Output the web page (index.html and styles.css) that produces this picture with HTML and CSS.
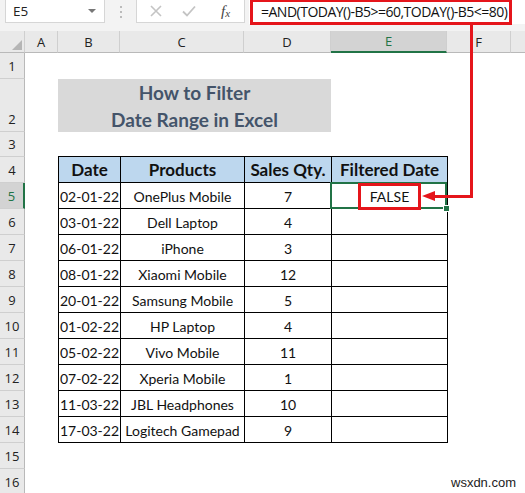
FILE: index.html
```html
<!DOCTYPE html>
<html>
<head>
<meta charset="utf-8">
<link rel="stylesheet" href="styles.css">
</head>
<body>
<div class="app">
  <div class="fbar">
    <div class="namebox"><span class="ref">E5</span><span class="dd"></span></div>
    <div class="grip"><i></i><i></i><i></i></div>
    <div class="btns">
      <svg class="ic" width="14" height="14" viewBox="0 0 14 14"><path d="M2 2L12 12M12 2L2 12" stroke="#c4c4c4" stroke-width="1.6" fill="none"/></svg>
      <svg class="ic" width="16" height="14" viewBox="0 0 16 14"><path d="M2 7.5L6 11.5L14 2.5" stroke="#c4c4c4" stroke-width="1.8" fill="none"/></svg>
      <span class="fx">f<sub>x</sub></span>
    </div>
    <div class="formula">=AND(TODAY()-B5&gt;=60,TODAY()-B5&lt;=80)</div>
  </div>

  <div class="sheet">
    <div class="ch corner"><svg width="10" height="10" viewBox="0 0 10 10"><path d="M10 0L10 10L0 10Z" fill="#b5b5b5"/></svg></div>
    <div class="ch">A</div>
    <div class="ch">B</div>
    <div class="ch">C</div>
    <div class="ch">D</div>
    <div class="ch sel">E</div>
    <div class="ch">F</div>
    <div class="ch last"></div>

    <div class="rh r1">1</div>
    <div class="rh r2">2</div>
    <div class="rh r3">3</div>
    <div class="rh r4">4</div>
    <div class="rh r5 sel">5</div>
    <div class="rh r6">6</div>
    <div class="rh r7">7</div>
    <div class="rh r8">8</div>
    <div class="rh r9">9</div>
    <div class="rh r10">10</div>
    <div class="rh r11">11</div>
    <div class="rh r12">12</div>
    <div class="rh r13">13</div>
    <div class="rh r14">14</div>
    <div class="rh r15">15</div>
    <div class="rh r16">16</div>

    <div class="title"><span>How to Filter</span><span>Date Range in Excel</span></div>

    <table class="data">
      <colgroup><col class="cb"><col class="cc"><col class="cd"><col class="ce"></colgroup>
      <thead>
        <tr><th>Date</th><th>Products</th><th>Sales Qty.</th><th>Filtered Date</th></tr>
      </thead>
      <tbody>
        <tr><td>02-01-22</td><td>OnePlus Mobile</td><td>7</td><td>FALSE</td></tr>
        <tr><td>03-01-22</td><td>Dell Laptop</td><td>4</td><td></td></tr>
        <tr><td>06-01-22</td><td>iPhone</td><td>3</td><td></td></tr>
        <tr><td>08-01-22</td><td>Xiaomi Mobile</td><td>12</td><td></td></tr>
        <tr><td>20-01-22</td><td>Samsung Mobile</td><td>5</td><td></td></tr>
        <tr><td>01-02-22</td><td>HP Laptop</td><td>4</td><td></td></tr>
        <tr><td>05-02-22</td><td>Vivo Mobile</td><td>11</td><td></td></tr>
        <tr><td>07-02-22</td><td>Xperia Mobile</td><td>1</td><td></td></tr>
        <tr><td>11-03-22</td><td>JBL Headphones</td><td>10</td><td></td></tr>
        <tr><td>17-03-22</td><td>Logitech Gamepad</td><td>9</td><td></td></tr>
      </tbody>
    </table>
  </div>

  <div class="selbox"></div>
  <div class="handle"></div>
  <div class="redbox fbox"></div>
  <div class="redbox falsebox"></div>
  <div class="vline"></div>
  <div class="hline"></div>
  <div class="ahead"></div>
  <div class="wm">wsxdn.com</div>
</div>
</body>
</html>
```

FILE: styles.css
```css
html, body {
  margin: 0;
  padding: 0;
  background: #ffffff;
}
.app {
  position: relative;
  width: 525px;
  height: 493px;
  overflow: hidden;
  font-family: Lato, "Open Sans", sans-serif;
  color: #000;
}
.fbar {
  height: 31px;
  background: #f3f3f3;
  display: flex;
  align-items: flex-start;
}
.namebox {
  margin-left: 5px;
  width: 100px;
  height: 23px;
  background: #fff;
  border: 1px solid #d6d6d6;
  border-top: none;
  display: flex;
  align-items: center;
  justify-content: space-between;
  padding: 0 8px 0 7px;
  box-sizing: border-box;
  font-family: "Open Sans", sans-serif;
  font-size: 13.5px;
  color: #222;
}
.dd {
  width: 0;
  height: 0;
  border-left: 4px solid transparent;
  border-right: 4px solid transparent;
  border-top: 4px solid #777;
}
.grip {
  width: 31px;
  height: 23px;
  display: flex;
  flex-direction: column;
  align-items: center;
  justify-content: center;
  gap: 3px;
}
.grip i {
  display: block;
  width: 2px;
  height: 2px;
  background: #bbb;
}
.btns {
  width: 109px;
  height: 23px;
  background: #fff;
  border: 1px solid #d6d6d6;
  border-top: none;
  box-sizing: border-box;
  display: flex;
  align-items: center;
  padding: 0 4px 0 12px;
  gap: 18px;
}
.fx {
  font-family: "Liberation Serif", serif;
  font-style: italic;
  font-size: 15px;
  color: #444;
  margin-left: 6px;
}
.fx sub {
  font-size: 11px;
  vertical-align: -1px;
}
.formula {
  margin-left: 4px;
  flex: 1;
  height: 24px;
  background: #fff;
  font-family: "Open Sans", sans-serif;
  font-size: 14px;
  letter-spacing: -0.5px;
  line-height: 24px;
  padding-left: 12px;
  white-space: nowrap;
  color: #111;
}

.sheet {
  display: grid;
  grid-template-columns: 25px 33px 62px 124px 87px 116px 64px 14px;
  grid-template-rows: 22px 26px 53px 25px repeat(13, 26px);
}
.ch {
  grid-row: 1;
  background: #e9e9e9;
  border-right: 1px solid #cfcfcf;
  border-bottom: 1px solid #b9b9b9;
  box-sizing: border-box;
  display: flex;
  align-items: center;
  justify-content: center;
  font-family: "Open Sans", sans-serif;
  font-size: 13px;
  color: #222;
}
.ch.corner {
  align-items: flex-end;
  justify-content: flex-end;
  padding: 0 2px 2px 0;
}
.ch.sel {
  background: #d3d3d3;
  border-bottom: 2px solid #217346;
  color: #217346;
}
.ch.last { border-right: none; }
.rh {
  grid-column: 1;
  background: #e9e9e9;
  border-right: 1px solid #b9b9b9;
  border-bottom: 1px solid #cfcfcf;
  box-sizing: border-box;
  display: flex;
  align-items: flex-end;
  justify-content: center;
  padding-bottom: 3px;
  font-family: "Open Sans", sans-serif;
  font-size: 13px;
  color: #222;
}
.rh.sel {
  background: #d3d3d3;
  border-right: 2px solid #217346;
  color: #217346;
}
.r1 { grid-row: 2; }
.r2 { grid-row: 3; }
.r3 { grid-row: 4; }
.r4 { grid-row: 5; }
.r5 { grid-row: 6; }
.r6 { grid-row: 7; }
.r7 { grid-row: 8; }
.r8 { grid-row: 9; }
.r9 { grid-row: 10; }
.r10 { grid-row: 11; }
.r11 { grid-row: 12; }
.r12 { grid-row: 13; }
.r13 { grid-row: 14; }
.r14 { grid-row: 15; }
.r15 { grid-row: 16; }
.r16 { grid-row: 17; }

.title {
  grid-column: 3 / 6;
  grid-row: 3;
  background: #d9d9d9;
  display: flex;
  flex-direction: column;
  align-items: center;
  justify-content: center;
  font-weight: bold;
  font-size: 19px;
  line-height: 27px;
  color: #44546a;
  padding-top: 1px;
}

.data {
  grid-column: 3 / 7;
  grid-row: 5 / 16;
  align-self: start;
  border-collapse: collapse;
  table-layout: fixed;
  width: 389px;
  margin-top: -1px;
}
.cb { width: 62px; }
.cc { width: 124px; }
.cd { width: 87px; }
.ce { width: 116px; }
.data tr { height: 26px; }
.data th, .data td {
  border: 1px solid #000;
  padding: 0;
  line-height: 18px;
  text-align: center;
  vertical-align: middle;
  white-space: nowrap;
  overflow: hidden;
}
.data th {
  background: #bdd7ee;
  font-weight: bold;
  font-size: 17px;
  color: #111;
}
.data td {
  font-size: 14px;
  color: #111;
  padding-top: 2px;
}

.selbox {
  position: absolute;
  left: 330px;
  top: 182px;
  width: 113px;
  height: 23px;
  border: 2px solid #217346;
}
.handle {
  position: absolute;
  left: 443px;
  top: 205px;
  width: 5px;
  height: 5px;
  background: #217346;
  border: 1px solid #fff;
}
.redbox {
  position: absolute;
  border: 3px solid #e5151b;
  box-sizing: border-box;
}
.fbox {
  left: 250px;
  top: -1px;
  width: 262px;
  height: 26px;
}
.falsebox {
  left: 358px;
  top: 183px;
  width: 63px;
  height: 27px;
}
.vline {
  position: absolute;
  left: 470px;
  top: 24px;
  width: 3px;
  height: 174px;
  background: #e5151b;
}
.hline {
  position: absolute;
  left: 432px;
  top: 195px;
  width: 41px;
  height: 3px;
  background: #e5151b;
}
.ahead {
  position: absolute;
  left: 422px;
  top: 191px;
  width: 0;
  height: 0;
  border-top: 5.5px solid transparent;
  border-bottom: 5.5px solid transparent;
  border-right: 13px solid #e5151b;
}
.wm {
  position: absolute;
  left: 451px;
  top: 475px;
  font-family: "Liberation Sans", Arial, sans-serif;
  font-size: 13px;
  color: #222;
}
```
